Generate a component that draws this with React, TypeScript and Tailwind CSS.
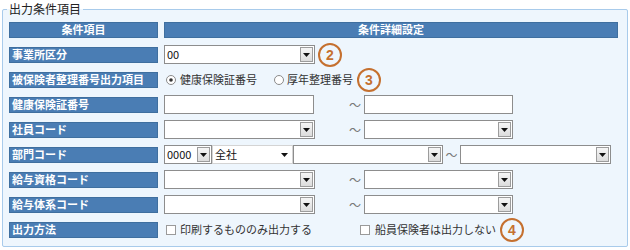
import React from "react";

const JP = "font-['Noto_Sans_CJK_JP','Noto_Sans',sans-serif]";

function Tri() {
  return (
    <svg width="7" height="4" viewBox="0 0 7 4">
      <polygon points="0,0 7,0 3.5,4" fill="#111" />
    </svg>
  );
}

function Select({ w, value = "", flat = false }: { w: string; value?: string; flat?: boolean }) {
  if (flat) {
    return (
      <div className={`flex h-[19px] items-center border border-[#d4d4d4] bg-white ${w}`}>
        <span className="flex-1 pl-[2px] text-[11px] leading-none text-[#111]">{value}</span>
        <span className="mr-[3px] flex w-[9px] items-center justify-center">
          <Tri />
        </span>
      </div>
    );
  }
  return (
    <div className={`flex h-[19px] items-center border border-[#8d8d8d] bg-white ${w}`}>
      <span className="flex-1 pl-[2px] text-[11px] leading-none text-[#111]">{value}</span>
      <span className="mr-[1px] flex h-[15px] w-[13px] items-center justify-center border border-[#9c9c9c] bg-gradient-to-b from-[#f6f6f6] to-[#dcdcdc]">
        <Tri />
      </span>
    </div>
  );
}

function Input({ w }: { w: string }) {
  return <div className={`h-[19px] border border-[#8d8d8d] bg-white ${w}`} />;
}

function Tilde({ w, center = false }: { w: string; center?: boolean }) {
  return (
    <span className={`flex ${w} ${center ? "justify-center" : "justify-end pr-[3px]"} text-[12px] leading-none text-[#777]`}>
      〜
    </span>
  );
}

function Badge({ n, ml }: { n: string; ml: string }) {
  return (
    <span
      className={`flex h-[24px] w-[24px] items-center justify-center rounded-full border-2 border-[#c5702f] font-['Liberation_Sans',sans-serif] text-[14px] font-bold leading-none text-[#c5702f] ${ml}`}
    >
      {n}
    </span>
  );
}

function Radio({ checked }: { checked?: boolean }) {
  return (
    <svg width="10" height="10" viewBox="0 0 10 10">
      <circle cx="5" cy="5" r="4.5" fill="#fff" stroke="#8a8a8a" />
      {checked && <circle cx="5" cy="5" r="1.8" fill="#333" />}
    </svg>
  );
}

function Check() {
  return <span className="h-[10px] w-[10px] border border-[#9a9a9a] bg-white" />;
}

function Row({ label, children }: { label: string; children?: React.ReactNode }) {
  return (
    <div className="flex h-[25px] items-center gap-[6px]">
      <div className="flex h-[16px] w-[149px] items-center border border-[#3f6f9f] bg-[#4a7db4] pl-[2px] text-[11px] font-bold leading-none text-white">
        {label}
      </div>
      <div className="flex items-center text-[11px] leading-none text-[#333]">{children}</div>
    </div>
  );
}

export default function App() {
  return (
    <div className={`h-[250px] w-[630px] bg-white pt-[1px] ${JP}`}>
      <fieldset className="ml-[2px] w-[626px] rounded-[2px] border border-[#a8cbeb] bg-[#eef6fd] pb-[4px] pl-[6px] pr-[9px]">
        <legend className="-ml-[2px] px-[2px] text-[12px] leading-[16px] text-[#222]">出力条件項目</legend>

        {/* header */}
        <div className="flex h-[25px] items-center gap-[6px]">
          <div className="flex h-[16px] w-[149px] items-center justify-center border border-[#3f6f9f] bg-[#4a7db4] text-[11px] font-bold leading-none text-white">
            条件項目
          </div>
          <div className="flex h-[16px] w-[454px] items-center justify-center border border-[#3f6f9f] bg-[#4a7db4] text-[11px] font-bold leading-none text-white">
            条件詳細設定
          </div>
        </div>

        <Row label="事業所区分">
          <Select w="w-[151px]" value="00" />
          <Badge n="2" ml="ml-[3px]" />
        </Row>

        <Row label="被保険者整理番号出力項目">
          <span className="ml-[2px] flex">
            <Radio checked />
          </span>
          <span className="ml-[4px]">健康保険証番号</span>
          <span className="ml-[17px] flex">
            <Radio />
          </span>
          <span className="ml-[3px]">厚年整理番号</span>
          <Badge n="3" ml="ml-[4px]" />
        </Row>

        <Row label="健康保険証番号">
          <Input w="w-[150px]" />
          <Tilde w="w-[50px]" />
          <Input w="w-[149px]" />
        </Row>

        <Row label="社員コード">
          <Select w="w-[151px]" />
          <Tilde w="w-[49px]" />
          <Select w="w-[149px]" />
        </Row>

        <Row label="部門コード">
          <Select w="w-[48px]" value="0000" />
          <Select w="w-[81px]" value="全社" flat />
          <Select w="w-[150px]" />
          <Tilde w="w-[17px]" center />
          <Select w="w-[151px]" />
        </Row>

        <Row label="給与資格コード">
          <Select w="w-[151px]" />
          <Tilde w="w-[49px]" />
          <Select w="w-[149px]" />
        </Row>

        <Row label="給与体系コード">
          <Select w="w-[151px]" />
          <Tilde w="w-[49px]" />
          <Select w="w-[149px]" />
        </Row>

        <Row label="出力方法">
          <span className="ml-[2px] flex">
            <Check />
          </span>
          <span className="ml-[4px]">印刷するもののみ出力する</span>
          <span className="ml-[48px] flex">
            <Check />
          </span>
          <span className="ml-[5px]">船員保険者は出力しない</span>
          <Badge n="4" ml="ml-[4px]" />
        </Row>
      </fieldset>
    </div>
  );
}
